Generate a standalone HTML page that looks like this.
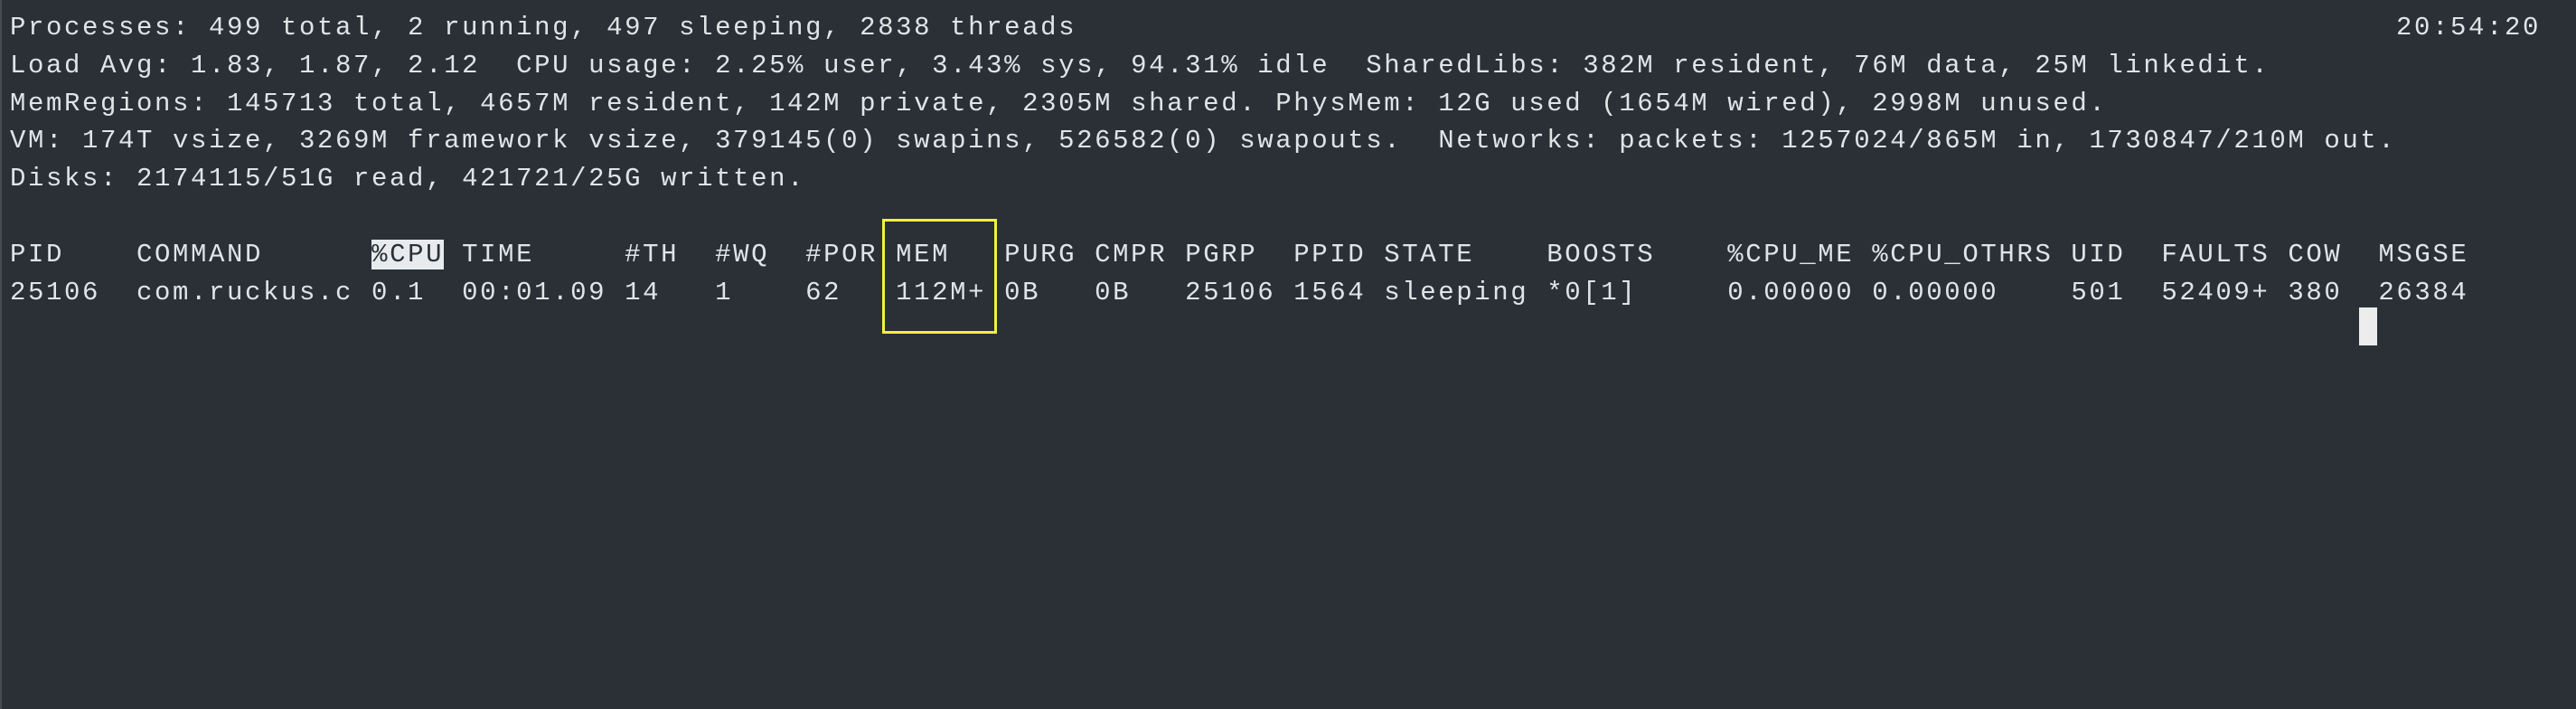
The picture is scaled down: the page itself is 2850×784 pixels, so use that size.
<!DOCTYPE html>
<html><head><meta charset="utf-8"><style>
html,body{margin:0;padding:0;}
body{width:2850px;height:784px;background:#2a3036;position:relative;overflow:hidden;}
pre{position:absolute;left:11px;top:10px;margin:0;font-family:"Liberation Mono",monospace;font-size:29px;letter-spacing:2.6px;line-height:41.8px;color:#e1e4e7;}
.hl{background:#e8ebee;color:#2a3036;}
.clock{position:absolute;left:2651px;top:10px;font-family:"Liberation Mono",monospace;font-size:29px;letter-spacing:2.6px;line-height:41.8px;color:#e1e4e7;margin:0;}
.box{position:absolute;left:976px;top:242px;width:121px;height:121px;border:3px solid #f4ef3a;}
.cur{position:absolute;left:2610px;top:340px;width:20px;height:42px;background:#ececec;}
.edge{position:absolute;left:0;top:0;width:2px;height:784px;background:#454b52;}
</style></head><body>
<div class="edge"></div>
<pre>Processes: 499 total, 2 running, 497 sleeping, 2838 threads
Load Avg: 1.83, 1.87, 2.12  CPU usage: 2.25% user, 3.43% sys, 94.31% idle  SharedLibs: 382M resident, 76M data, 25M linkedit.
MemRegions: 145713 total, 4657M resident, 142M private, 2305M shared. PhysMem: 12G used (1654M wired), 2998M unused.
VM: 174T vsize, 3269M framework vsize, 379145(0) swapins, 526582(0) swapouts.  Networks: packets: 1257024/865M in, 1730847/210M out.
Disks: 2174115/51G read, 421721/25G written.

PID    COMMAND      <span class="hl">%CPU</span> TIME     #TH  #WQ  #POR MEM   PURG CMPR PGRP  PPID STATE    BOOSTS    %CPU_ME %CPU_OTHRS UID  FAULTS COW  MSGSE
25106  com.ruckus.c 0.1  00:01.09 14   1    62   112M+ 0B   0B   25106 1564 sleeping *0[1]     0.00000 0.00000    501  52409+ 380  26384</pre>
<div class="clock">20:54:20</div>
<div class="box"></div>
<div class="cur"></div>
</body></html>
